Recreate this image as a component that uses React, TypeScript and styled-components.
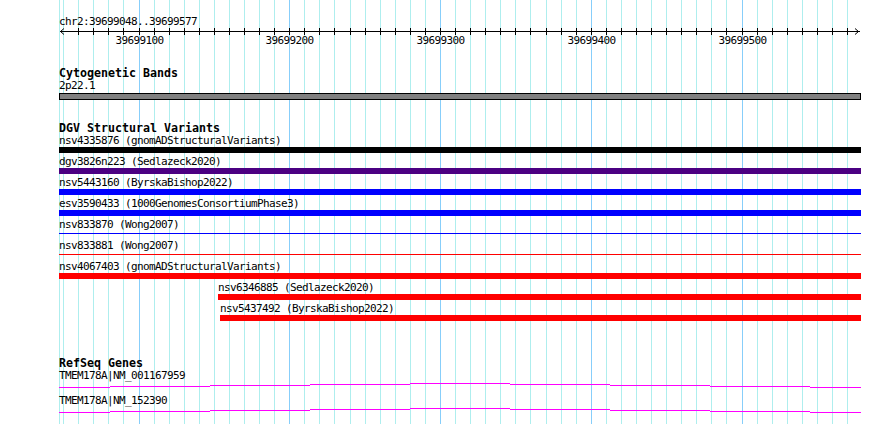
import React from 'react';
import styled, { createGlobalStyle } from 'styled-components';

const GlobalStyle = createGlobalStyle`
  html, body {
    margin: 0;
    padding: 0;
    background: #ffffff;
  }
  body {
    font-family: "DejaVu Sans Mono", "Liberation Mono", monospace;
    color: #000000;
  }
`;

// track area runs from x=59 to x=861
const LEFT = 59;
const TRACK_W = 802;
const bpToX = (b: number) => Math.round(138.5 + (b - 39699100) * 1.5075);

const gridBases: number[] = [];
for (let b = 39699050; b <= 39699570; b += 10) gridBases.push(b);
const tickLabels = [39699100, 39699200, 39699300, 39699400, 39699500];

const Panel = styled.div`
  position: relative;
  width: 890px;
  height: 424px;
  overflow: hidden;
  background: #ffffff;
`;

const GridLayer = styled.svg`
  position: absolute;
  inset: 0;
  z-index: 0;
`;

const Tracks = styled.div`
  position: relative;
  z-index: 1;
  display: flex;
  flex-direction: column;
  padding-left: ${LEFT}px;
  width: ${TRACK_W}px;
`;

const Text = styled.div<{ $offset?: number }>`
  font-size: 11px;
  letter-spacing: -0.62px;
  line-height: 13px;
  height: 13px;
  white-space: pre;
  padding-left: ${(p) => p.$offset || 0}px;
`;

const RulerLabel = styled(Text)`
  margin-top: 15px;
`;

const Scale = styled.svg`
  display: block;
  font-family: "DejaVu Sans Mono", "Liberation Mono", monospace;
  font-size: 11px;
  letter-spacing: -0.62px;
`;

const TrackTitle = styled.div<{ $gap: number }>`
  margin-top: ${(p) => p.$gap}px;
  font-size: 11.63px;
  font-weight: bold;
  line-height: 12px;
  height: 12px;
  white-space: pre;
`;

const Band = styled.div`
  margin-top: 1px;
  box-sizing: border-box;
  width: ${TRACK_W}px;
  height: 7px;
  border: 1px solid #000000;
  background: #808080;
`;

const Rows = styled.div`
  display: flex;
  flex-direction: column;
  gap: 2px;
`;

const Row = styled.div`
  display: flex;
  flex-direction: column;
`;

const Bar = styled.div<{ $color: string; $offset: number; $thin?: boolean }>`
  margin-left: ${(p) => p.$offset}px;
  width: ${(p) => TRACK_W - p.$offset}px;
  height: ${(p) => (p.$thin ? 1 : 6)}px;
  margin-top: ${(p) => (p.$thin ? 2 : 0)}px;
  margin-bottom: ${(p) => (p.$thin ? 3 : 0)}px;
  background: ${(p) => p.$color};
`;

const GeneSvg = styled.svg`
  display: block;
`;

type Variant = { name: string; color: string; offset: number; thin?: boolean };

const variants: Variant[] = [
  { name: 'nsv4335876 (gnomADStructuralVariants)', color: '#000000', offset: 0 },
  { name: 'dgv3826n223 (Sedlazeck2020)', color: '#4b0082', offset: 0 },
  { name: 'nsv5443160 (ByrskaBishop2022)', color: '#0000ff', offset: 0 },
  { name: 'esv3590433 (1000GenomesConsortiumPhase3)', color: '#0000ff', offset: 0 },
  { name: 'nsv833870 (Wong2007)', color: '#0000ff', offset: 0, thin: true },
  { name: 'nsv833881 (Wong2007)', color: '#ff0000', offset: 0, thin: true },
  { name: 'nsv4067403 (gnomADStructuralVariants)', color: '#ff0000', offset: 0 },
  { name: 'nsv6346885 (Sedlazeck2020)', color: '#ff0000', offset: 159 },
  { name: 'nsv5437492 (ByrskaBishop2022)', color: '#ff0000', offset: 161 },
];

const genes = ['TMEM178A|NM_001167959', 'TMEM178A|NM_152390'];

// intron "hat" drawn as 1px steps, absolute x
const hatSteps: [number, number, number][] = [
  [59, 110, 5],
  [110, 210, 4],
  [210, 310, 3],
  [310, 410, 2],
  [410, 510, 1],
  [510, 610, 2],
  [610, 710, 3],
  [710, 810, 4],
  [810, 861, 5],
];

function Grid() {
  return (
    <GridLayer width={890} height={424}>
      <line x1={59.5} x2={59.5} y1={0} y2={424} stroke="#aeeeee" />
      {gridBases.map((b) => {
        const x = bpToX(b) + 0.5;
        const major = b % 100 === 0;
        return (
          <line key={b} x1={x} x2={x} y1={0} y2={424} stroke={major ? '#87cefa' : '#aeeeee'} />
        );
      })}
    </GridLayer>
  );
}

function Ruler() {
  return (
    <>
      <RulerLabel>chr2:39699048..39699577</RulerLabel>
      <Scale width={TRACK_W} height={20}>
        <line x1={1} x2={TRACK_W - 1} y1={3.5} y2={3.5} stroke="#000" />
        <polyline points="5,0.5 1.5,3.5 5,6.5" fill="none" stroke="#000" />
        <polyline points={`${TRACK_W - 6},0.5 ${TRACK_W - 2.5},3.5 ${TRACK_W - 6},6.5`} fill="none" stroke="#000" />
        {gridBases.slice(1).map((b) => {
          const x = bpToX(b) - LEFT + 0.5;
          return <line key={b} x1={x} x2={x} y1={0} y2={7} stroke="#000" />;
        })}
        {tickLabels.map((b) => (
          <text key={b} x={bpToX(b) - LEFT + 0.5} y={15.5} textAnchor="middle" fill="#000">
            {b}
          </text>
        ))}
      </Scale>
    </>
  );
}

export default function App() {
  return (
    <Panel>
      <GlobalStyle />
      <Grid />
      <Tracks>
        <Ruler />

        <TrackTitle $gap={19}>Cytogenetic Bands</TrackTitle>
        <Text>2p22.1</Text>
        <Band />

        <TrackTitle $gap={22}>DGV Structural Variants</TrackTitle>
        <Rows>
          {variants.map((v) => (
            <Row key={v.name}>
              <Text $offset={v.offset}>{v.name}</Text>
              <Bar $color={v.color} $offset={v.offset} $thin={v.thin} />
            </Row>
          ))}
        </Rows>

        <TrackTitle $gap={36}>RefSeq Genes</TrackTitle>
        {genes.map((g) => (
          <Row key={g}>
            <Text>{g}</Text>
            <GeneSvg width={TRACK_W} height={12}>
              {hatSteps.map(([x1, x2, y]) => (
                <rect key={x1} x={x1 - LEFT} y={y} width={x2 - x1} height={1} fill="#ff00ff" />
              ))}
            </GeneSvg>
          </Row>
        ))}
      </Tracks>
    </Panel>
  );
}
